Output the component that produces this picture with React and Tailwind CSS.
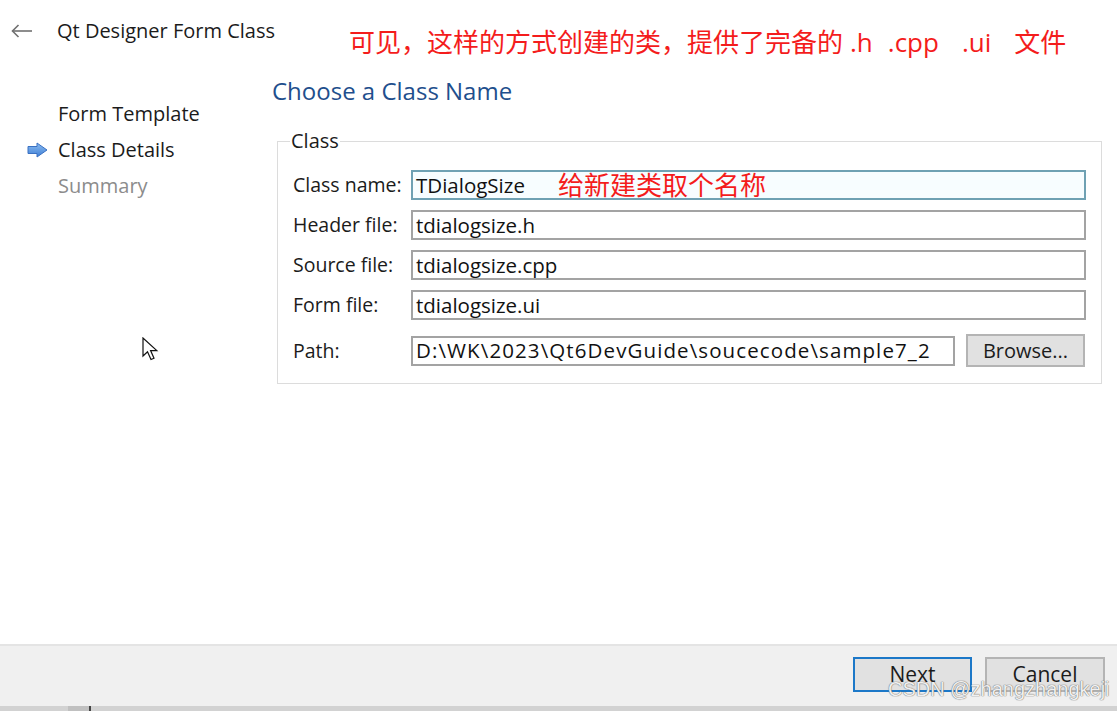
import React from 'react';

const ui = { fontFamily: '"Open Sans", "Noto Sans CJK SC", sans-serif' };
const cjk = { fontFamily: '"Open Sans", "Noto Sans CJK SC", sans-serif' };

function BackArrow() {
  return (
    <svg width="22" height="14" viewBox="0 0 22 14" className="text-[#707070]">
      <path d="M1.5 7 H21" stroke="currentColor" strokeWidth="1.6" fill="none" />
      <path d="M7.5 1 L1.5 7 L7.5 13" stroke="currentColor" strokeWidth="1.6" fill="none" strokeLinejoin="miter" />
    </svg>
  );
}

function StepArrow() {
  return (
    <svg width="21" height="16" viewBox="0 0 21 16">
      <defs>
        <linearGradient id="sa" x1="0" y1="0" x2="0" y2="1">
          <stop offset="0" stopColor="#8cbcf0" />
          <stop offset="1" stopColor="#3f7fd6" />
        </linearGradient>
      </defs>
      <path d="M1 4.5 H10 V1 L20 8 L10 15 V11.5 H1 Z" fill="url(#sa)" stroke="#3a71c2" strokeWidth="1" strokeLinejoin="round" />
    </svg>
  );
}

function Cursor() {
  return (
    <svg width="18" height="26" viewBox="0 0 18 26">
      <path d="M1 1 V19 L5.5 14.8 L9 22.5 L12 21.2 L8.6 13.6 H14.8 Z" fill="#fff" stroke="#111" strokeWidth="1.2" strokeLinejoin="miter" />
    </svg>
  );
}

function Field({ label, value, accent, children }) {
  return (
    <div className="flex items-center h-[30px]">
      <div className="w-[118px] text-[19.5px] text-[#1b1b1b] leading-none">{label}</div>
      <div
        className={`flex-1 h-[30px] flex items-center pl-[3px] text-[20.5px] leading-none text-[#111] border-2 ${
          accent ? 'border-[#6fa1b3] bg-[#f7fdff]' : 'border-[#a3a3a3] bg-white'
        }`}
      >
        {value}
        {children}
      </div>
    </div>
  );
}

export default function App() {
  return (
    <div className="w-[1117px] h-[711px] bg-white flex flex-col relative overflow-hidden" style={ui}>
      <header className="h-[64px] flex items-start">
        <div className="ml-[11px] mt-[24px]"><BackArrow /></div>
        <div className="ml-[24px] w-[292px] mt-[18px] text-[20px] leading-[26px] text-[#1b1b1b]">Qt Designer Form Class</div>
        <div className="mt-[24px] flex text-[26px] leading-[36px] text-[#f41c1c] whitespace-nowrap" style={cjk}>
          <span>可见，这样的方式创建的类，提供了完备的</span>
          <span className="ml-[7px]">.h</span>
          <span className="ml-[15px]">.cpp</span>
          <span className="ml-[23px]">.ui</span>
          <span className="ml-[23px]">文件</span>
        </div>
      </header>

      <div className="flex-1 flex">
        <nav className="w-[272px] pt-[32px] flex flex-col text-[20px]">
          <div className="h-[36px] flex items-center pl-[58px] text-[#1b1b1b]">Form Template</div>
          <div className="h-[36px] flex items-center text-[#1b1b1b]">
            <span className="w-[58px] pl-[27px] flex items-center"><StepArrow /></span>
            Class Details
          </div>
          <div className="h-[36px] flex items-center pl-[58px] text-[#8c8c8c]">Summary</div>
        </nav>

        <main className="flex-1 pt-[12px] pr-[15px]">
          <h1 className="h-[30px] flex items-center text-[24px] text-[#1f4f8d] leading-none">Choose a Class Name</h1>
          <fieldset className="ml-[5px] mt-[22px] border border-[#dcdcdc] px-[15px] pb-[16px]">
            <legend className="ml-[-3px] px-[1px] text-[20px] leading-[26px] text-[#1b1b1b]">Class</legend>
            <div className="pt-[16px] flex flex-col gap-[10px]">
              <Field label="Class name:" value="TDialogSize" accent>
                <span className="ml-[33px] text-[26px] text-[#f41c1c]" style={cjk}>给新建类取个名称</span>
              </Field>
              <Field label="Header file:" value="tdialogsize.h" />
              <Field label="Source file:" value="tdialogsize.cpp" />
              <Field label="Form file:" value="tdialogsize.ui" />
              <div className="flex items-center h-[33px] mt-[4px]">
                <div className="w-[118px] text-[19.5px] text-[#1b1b1b] leading-none">Path:</div>
                <div className="w-[544px] h-[30px] flex items-center pl-[3px] text-[20.5px] tracking-[1.1px] leading-none text-[#111] border-2 border-[#a3a3a3]">
                  D:\WK\2023\Qt6DevGuide\soucecode\sample7_2
                </div>
                <button className="ml-[11px] w-[119px] h-[33px] bg-[#e1e1e1] border-2 border-[#b4b4b4] text-[20px] leading-none text-[#1b1b1b]">
                  Browse...
                </button>
              </div>
            </div>
          </fieldset>
        </main>
      </div>

      <footer className="h-[62px] bg-[#f0f0f0] border-t-2 border-[#e4e4e4] flex items-start justify-end pr-[12px] pt-[11px] gap-[13px]">
        <button className="w-[119px] h-[35px] bg-[#e1e1e1] border-2 border-[#1c78c8] text-[21px] leading-none text-[#1b1b1b]">Next</button>
        <button className="w-[120px] h-[35px] bg-[#e1e1e1] border-2 border-[#b4b4b4] text-[21px] leading-none text-[#1b1b1b]">Cancel</button>
      </footer>
      <div className="h-[5px] bg-[#d2d2d2] flex">
        <div className="ml-[68px] w-[21px] bg-[#c0c0c0]" />
        <div className="w-[2px] bg-[#444]" />
      </div>

      <div className="absolute left-[142px] top-[337px]"><Cursor /></div>
      <div className="absolute left-[888px] top-[679px] text-[20px] leading-none text-white/90 [text-shadow:0_0_1px_#666,0_0_1px_#666]" style={{ fontFamily: '"Liberation Sans", sans-serif' }}>
        CSDN @zhangzhangkeji
      </div>
    </div>
  );
}
